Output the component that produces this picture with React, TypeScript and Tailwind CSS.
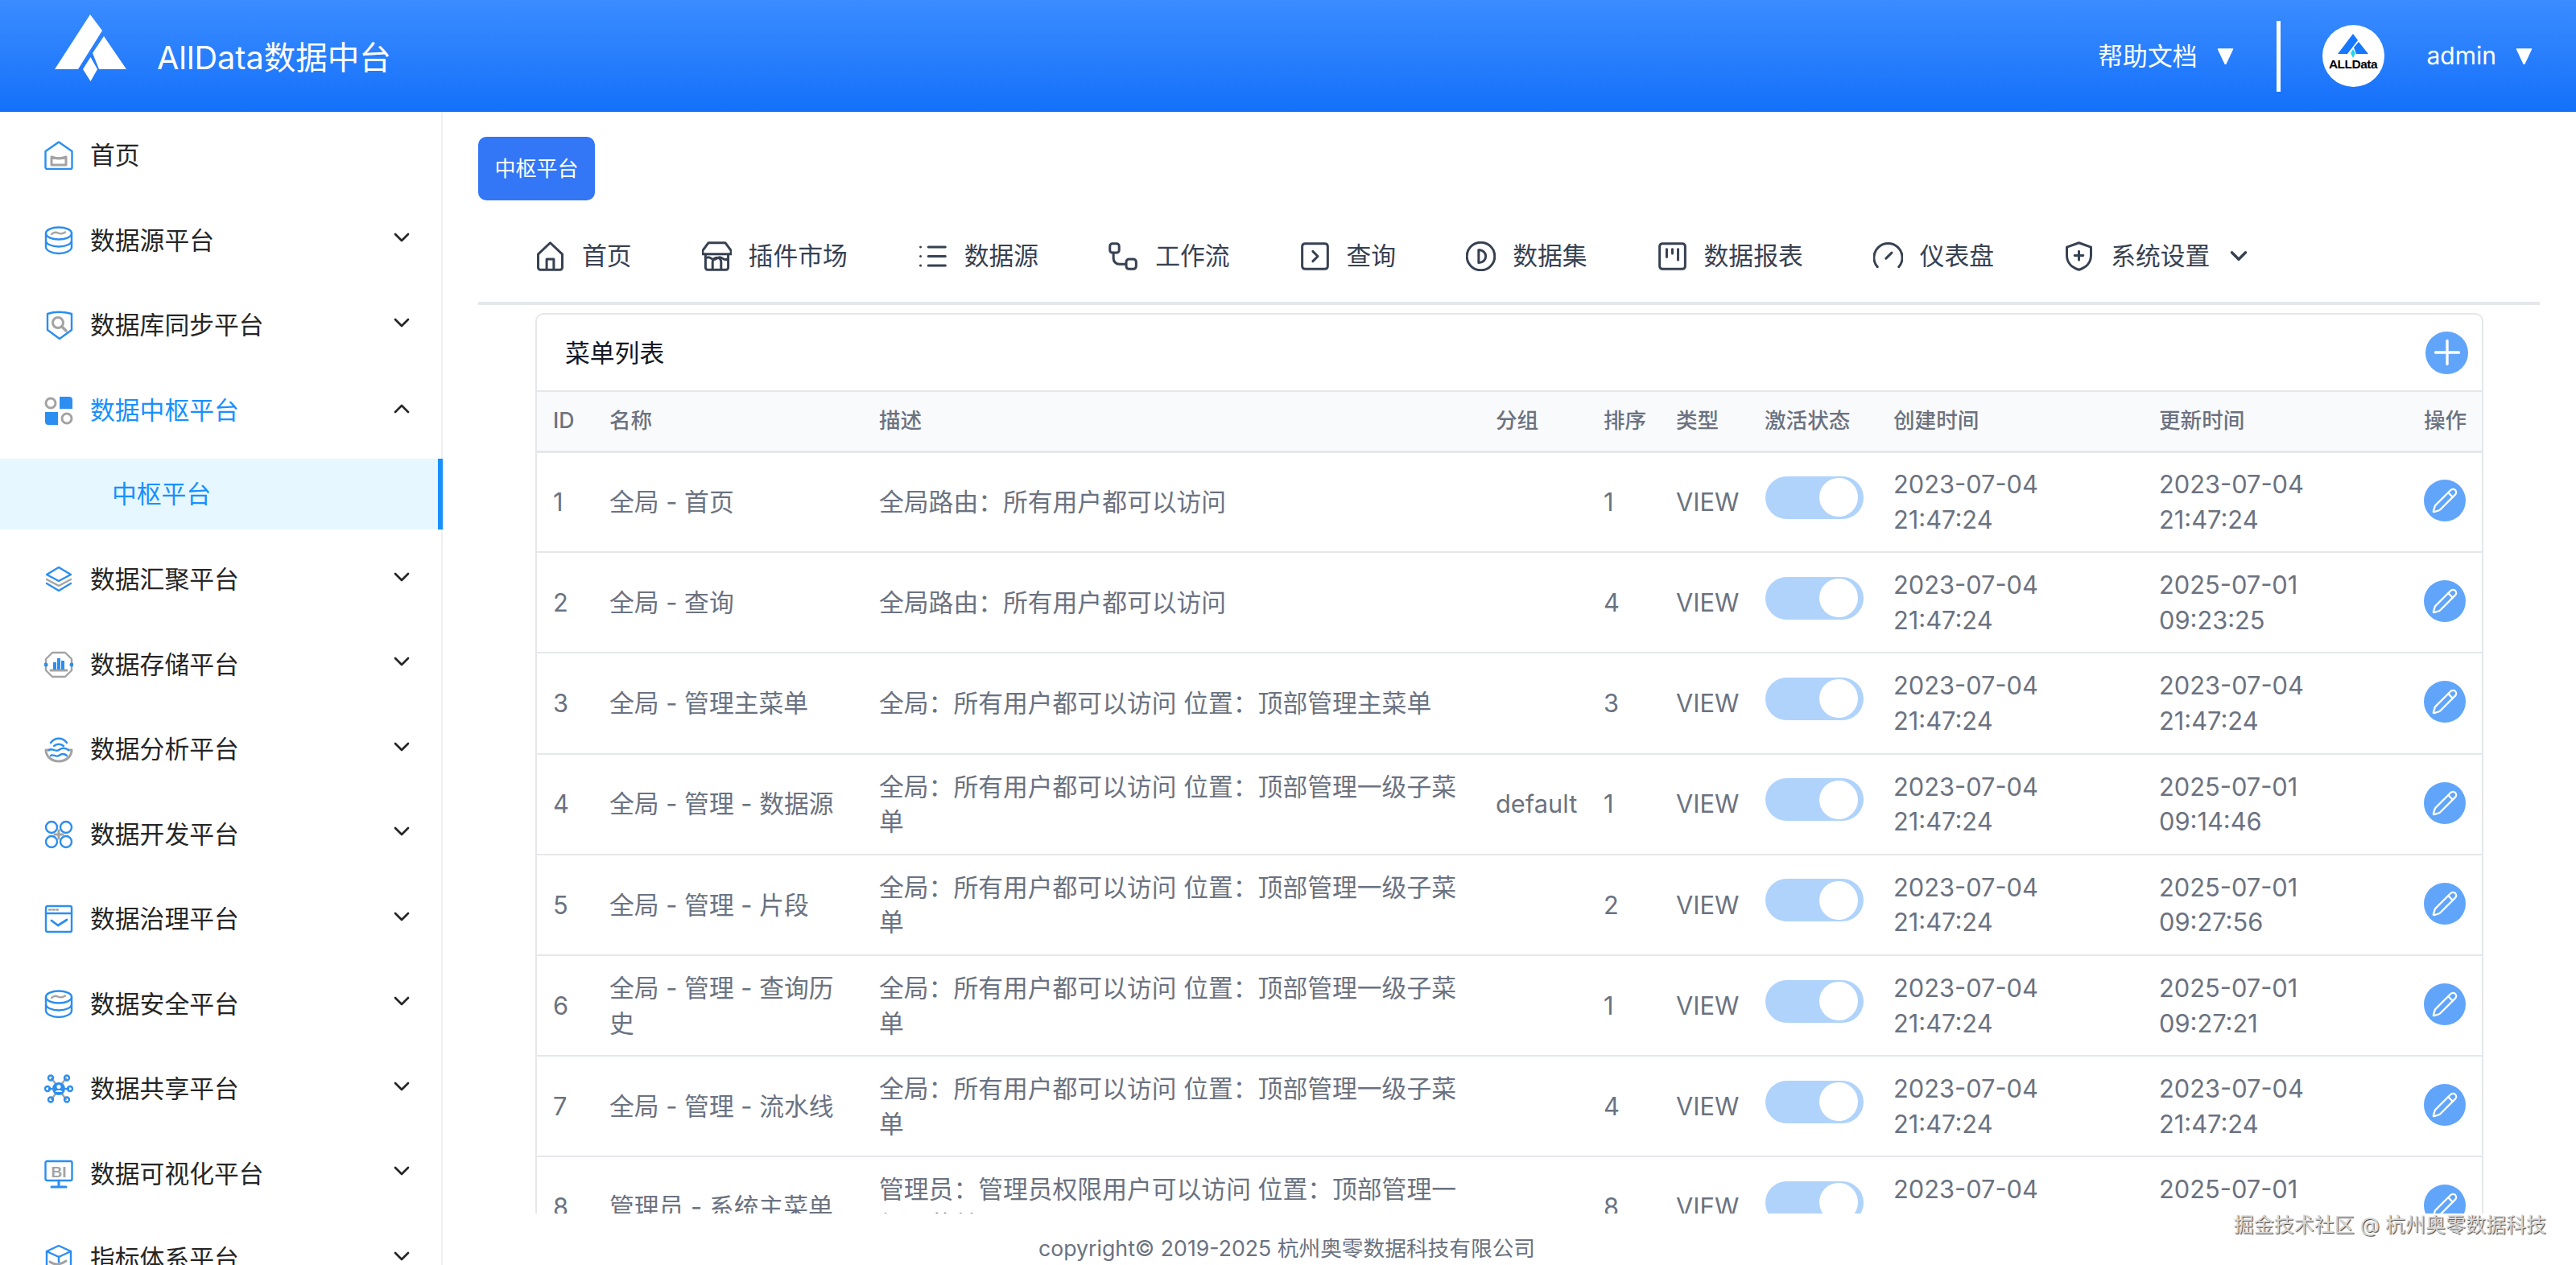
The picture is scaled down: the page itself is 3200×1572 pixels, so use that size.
import { ChevronDown, ChevronUp, Pencil, Plus } from 'lucide-react'
import type { ReactNode } from 'react'

const B = '#2b8ef0'
const G = '#a3a3a3'

function SideSvg({ children }: { children: ReactNode }) {
    return (
        <svg viewBox="0 0 36 36" fill="none" strokeWidth={2.4} strokeLinecap="round" strokeLinejoin="round" className="h-[36px] w-[36px] shrink-0">
            {children}
        </svg>
    )
}

const sideIcons: Record<string, ReactNode> = {
    home: (
        <>
            <path d="M1.5 13 18 1.5 34.5 13v20a2 2 0 0 1-2 2h-29a2 2 0 0 1-2-2z" stroke={B} />
            <path d="M9 20c6 2.500 12 2.500 18 0v10H9z" stroke={G} strokeWidth={3} />
        </>
    ),
    db: (
        <>
            <ellipse cx="18" cy="9" rx="16" ry="7.500" stroke={B} />
            <path d="M2 9v9c0 4 7 7.500 16 7.500S34 22 34 18V9M2 18v8c0 4 7 8 16 8s16-4 16-8v-8" stroke={B} />
            <path d="M9 10c3-3 5-3 8-1.500s6 1 9-1" stroke={G} />
        </>
    ),
    shield: (
        <>
            <path d="M4 4c9-3 19-3 30 0v20L19 35 4 24z" stroke={B} />
            <circle cx="17" cy="15" r="6.500" stroke={G} strokeWidth={3} />
            <path d="m22 20 5 5" stroke={G} strokeWidth={3.500} />
        </>
    ),
    apps: (
        <>
            <circle cx="8" cy="9" r="6" stroke={G} strokeWidth={3} />
            <path d="M19 1h12a4 4 0 0 1 4 4v11H19z" fill={B} />
            <path d="M1 20h16v16H5a4 4 0 0 1-4-4z" fill={B} />
            <circle cx="28" cy="28" r="6" stroke={G} strokeWidth={3} />
        </>
    ),
    stack: (
        <>
            <path d="M18 3 33 12 18 20 3 12z" stroke={B} />
            <path d="M3 18l15 8 15-8" stroke={G} />
            <path d="M3 23l15 9 15-9" stroke={B} />
        </>
    ),
    store: (
        <>
            <path d="M10 3h16l8 8v14l-8 8H10l-8-8V11z" stroke={G} />
            <path d="M8 25h20" stroke={G} strokeWidth={3} />
            <path d="M11 15h4v9h-4zM16 10h4v14h-4zM21 13h4v11h-4z" fill={B} />
            <circle cx="2" cy="18" r="2.500" fill={B} />
            <circle cx="34" cy="18" r="2.500" fill={B} />
        </>
    ),
    wave: (
        <>
            <path d="M8 10c5-7 15-7 20 0M12 14c3.500-3 8.500-3 12 0" stroke={B} />
            <path d="M2 19c0 8 7 14 16 14s16-6 16-14h-4M2 19h4" stroke={G} strokeWidth={3} />
            <path d="M6 19c4-3 8 3 12 0s8-3 12 0M8 26c3-2.500 6.500 2.500 10 0s7-2.500 10 0" stroke={B} />
        </>
    ),
    circles: (
        <>
            <circle cx="9" cy="9" r="7" stroke={B} />
            <circle cx="27" cy="9" r="7" stroke={B} />
            <circle cx="9" cy="27" r="7" stroke={B} />
            <circle cx="27" cy="27" r="7" stroke={B} />
            <path d="M18 13v10M13 18h10" stroke={G} strokeWidth={3} />
        </>
    ),
    check: (
        <>
            <rect x="2" y="2" width="32" height="32" rx="2" stroke={B} />
            <path d="M2 11h32" stroke={B} />
            <path d="M6 6.500h2M10.500 6.500h2M15 6.500h2" stroke={G} />
            <path d="m9 20 8 6 11-7" stroke={B} strokeWidth={2.800} />
        </>
    ),
    share: (
        <>
            <path d="m9 5 6 8M27 5l-6 8M9 31l6-8M27 31l-6-8" stroke={G} />
            <path d="M6 18h3M27 18h3" stroke={B} />
            <circle cx="18" cy="18" r="8" fill={B} />
            <circle cx="18" cy="15.500" r="2.500" fill="#fff" />
            <path d="M13.500 22c1-3 8-3 9 0z" fill="#fff" />
            <circle cx="8" cy="4.500" r="3" stroke={B} />
            <circle cx="28" cy="4.500" r="3" stroke={B} />
            <circle cx="4" cy="18" r="3" stroke={B} />
            <circle cx="32" cy="18" r="3" stroke={B} />
            <circle cx="8" cy="31.500" r="3" stroke={B} />
            <circle cx="28" cy="31.500" r="3" stroke={B} />
        </>
    ),
    bi: (
        <>
            <rect x="1.500" y="2" width="33" height="24" rx="2" stroke={B} />
            <text x="18" y="21.500" textAnchor="middle" fill={G} fontSize="19" fontWeight="700" fontFamily="Liberation Sans, sans-serif">BI</text>
            <path d="M18 26v7M9 34h18" stroke={B} strokeWidth={3} />
        </>
    ),
    cube: (
        <>
            <path d="M18 2 33 9v24H3V9z" stroke={B} />
            <path d="M3 9l15 7 15-7M18 16v6" stroke={B} />
            <path d="M7 22c5 4 13 4 20-1" stroke={G} strokeWidth={3} />
        </>
    ),
}

const sideMenus: { label: string; icon: string; arrow: boolean }[] = [
    { label: '首页', icon: 'home', arrow: false },
    { label: '数据源平台', icon: 'db', arrow: true },
    { label: '数据库同步平台', icon: 'shield', arrow: true },
]

const sideMenusBottom = [
    { label: '数据汇聚平台', icon: 'stack' },
    { label: '数据存储平台', icon: 'store' },
    { label: '数据分析平台', icon: 'wave' },
    { label: '数据开发平台', icon: 'circles' },
    { label: '数据治理平台', icon: 'check' },
    { label: '数据安全平台', icon: 'db' },
    { label: '数据共享平台', icon: 'share' },
    { label: '数据可视化平台', icon: 'bi' },
    { label: '指标体系平台', icon: 'cube' },
]

function SideItem({ label, icon, arrow = true }: { label: string; icon: string; arrow?: boolean }) {
    return (
        <div className="flex h-[105.5px] shrink-0 items-center gap-[21px] pl-[55px] pr-[35px] text-[#262626]">
            <SideSvg>{sideIcons[icon]}</SideSvg>
            <span>{label}</span>
            {arrow && <ChevronDown size={32} strokeWidth={2} className="mb-[7px] ml-auto" />}
        </div>
    )
}

function NavSvg({ d, extra }: { d: string; extra?: ReactNode }) {
    return (
        <svg viewBox="1.5 1.5 21 21" fill="none" stroke="currentColor" strokeWidth={1.7} strokeLinecap="round" strokeLinejoin="round" className="h-[37px] w-[37px] shrink-0">
            <path d={d} />
            {extra}
        </svg>
    )
}

const navItems = [
    { label: '首页', icon: <NavSvg d="M3.500 10.500 12 2.500l8.500 8v9.500a1.500 1.500 0 0 1-1.500 1.500H5A1.500 1.500 0 0 1 3.500 20zM9.500 21.500V14h5v7.500" /> },
    { label: '插件市场', icon: <NavSvg d="M6 2.500h12l4 5.500v2.500H2V8zM4 10.500V20a1.500 1.500 0 0 0 1.500 1.500h13A1.500 1.500 0 0 0 20 20v-9.500M9 21.500V16a3 3 0 0 1 6 0v5.500M4 13.500c1.300-1 2.700-1 4 0s2.700 1 4 0 2.700-1 4 0 2.700 1 4 0" /> },
    { label: '数据源', icon: <NavSvg d="M9 5.500h12M9 12h12M9 18.500h12M3.500 5.500h.01M3.500 12h.01M3.500 18.500h.01" /> },
    { label: '工作流', icon: <NavSvg d="M5 9.500v4a4 4 0 0 0 4 4h4.500" extra={<><rect x="2.500" y="3" width="6.500" height="6.500" rx="1.800" /><rect x="14" y="14" width="7" height="7" rx="2" /></>} /> },
    { label: '查询', icon: <NavSvg d="m10.500 8.500 3.500 3.500-3.500 3.500" extra={<rect x="3" y="3" width="18" height="18" rx="2" />} /> },
    { label: '数据集', icon: <NavSvg d="M10.500 7.500v9c3 0 5-2 5-4.500s-2-4.500-5-4.500z" extra={<circle cx="12" cy="12" r="9.800" />} /> },
    { label: '数据报表', icon: <NavSvg d="M8 7v5.500M12 7v3M16 7v7.500" extra={<rect x="3" y="3" width="18" height="18" rx="2" />} /> },
    { label: '仪表盘', icon: <NavSvg d="M4.500 19.500A10 10 0 1 1 19.500 19.500M10.500 13.500 14.500 9.500" /> },
]

function Triangle() {
    return (
        <svg viewBox="0 0 20 20" className="h-[20px] w-[21px] shrink-0" fill="#fff">
            <path d="M1 1h18L10 20z" stroke="#fff" strokeWidth={1.500} strokeLinejoin="round" />
        </svg>
    )
}

const GLOBAL = '全局路由：所有用户都可以访问'
const SUB = '全局：所有用户都可以访问 位置：顶部管理一级子菜单'

const rows = [
    { id: 1, name: '全局 - 首页', desc: GLOBAL, group: '', sort: 1, updated: ['2023-07-04', '21:47:24'] },
    { id: 2, name: '全局 - 查询', desc: GLOBAL, group: '', sort: 4, updated: ['2025-07-01', '09:23:25'] },
    { id: 3, name: '全局 - 管理主菜单', desc: '全局：所有用户都可以访问 位置：顶部管理主菜单', group: '', sort: 3, updated: ['2023-07-04', '21:47:24'] },
    { id: 4, name: '全局 - 管理 - 数据源', desc: SUB, group: 'default', sort: 1, updated: ['2025-07-01', '09:14:46'] },
    { id: 5, name: '全局 - 管理 - 片段', desc: SUB, group: '', sort: 2, updated: ['2025-07-01', '09:27:56'] },
    { id: 6, name: '全局 - 管理 - 查询历史', desc: SUB, group: '', sort: 1, updated: ['2025-07-01', '09:27:21'] },
    { id: 7, name: '全局 - 管理 - 流水线', desc: SUB, group: '', sort: 4, updated: ['2023-07-04', '21:47:24'] },
    { id: 8, name: '管理员 - 系统主菜单', desc: '管理员：管理员权限用户可以访问 位置：顶部管理一级子菜单', group: '', sort: 8, updated: ['2025-07-01', '09:27:11'] },
]

const headers = ['ID', '名称', '描述', '分组', '排序', '类型', '激活状态', '创建时间', '更新时间', '操作']

export default function App() {
    return (
        <div className="relative flex h-[1572px] flex-col overflow-hidden bg-white font-['Inter','Noto_Sans_CJK_SC',sans-serif] text-[30.8px] leading-[43.6px]">
            {/* top bar */}
            <header className="flex h-[139px] shrink-0 items-center bg-gradient-to-b from-[#3a8cff] to-[#1270fa] pl-[67px] pr-[54px] text-white">
                <svg viewBox="0 0 91 84" className="mb-[19px] h-[84px] w-[91px] shrink-0" fill="#fff">
                    <path d="M45 0 60 20 30 68H1zM62 27 90 68H56L48 48zM45.500 53 54 68 45.500 83 36 68z" />
                </svg>
                <span className="ml-[37px] mt-[6px] text-[39.6px]">AllData数据中台</span>
                <div className="ml-auto flex items-center gap-[24px]">
                    <span>帮助文档</span>
                    <Triangle />
                </div>
                <div className="ml-[53px] h-[88px] w-[5px] bg-white" />
                <div className="relative ml-[52px] h-[77px] w-[77px] shrink-0 overflow-hidden rounded-full bg-white">
                    <svg viewBox="0 0 40 30" className="mx-auto mt-[11px] h-[30px] w-[40px]">
                        <path d="M20 0 26 8 13 25H1zM27 10 39 25H24L21 17z" fill="#1677ff" />
                        <path d="M20 19 23 24 20 30 17 24z" fill="#22d3ee" />
                    </svg>
                    <div className="mt-[-1px] text-center font-['Liberation_Sans',sans-serif] text-[15.5px] font-bold leading-[18px] tracking-[-0.5px] text-black">ALLData</div>
                </div>
                <div className="ml-[53px] flex items-center gap-[24px]">
                    <span className="text-[30px]">admin</span>
                    <Triangle />
                </div>
            </header>

            <div className="flex min-h-0 flex-1">
                {/* left menu */}
                <aside className="flex w-[550px] shrink-0 flex-col overflow-hidden pt-[1.5px] shadow-[inset_-2px_0_0_#f0f0f0]">
                    {sideMenus.map(m => (
                        <SideItem key={m.label} label={m.label} icon={m.icon} arrow={m.arrow} />
                    ))}
                    <div className="flex h-[105.5px] shrink-0 items-center gap-[21px] pl-[55px] pr-[35px] text-[#1890ff]">
                        <SideSvg>{sideIcons.apps}</SideSvg>
                        <span>数据中枢平台</span>
                        <ChevronUp size={32} strokeWidth={2} className="mb-[4px] ml-auto text-[#262626]" />
                    </div>
                    <div className="mb-[10px] mt-[7px] flex h-[88px] shrink-0 items-center border-r-[6px] border-[#1890ff] bg-[#e6f7ff] pl-[139px] text-[#1890ff]">
                        中枢平台
                    </div>
                    {sideMenusBottom.map(m => (
                        <SideItem key={m.label} label={m.label} icon={m.icon} />
                    ))}
                </aside>

                {/* content */}
                <main className="flex min-w-0 flex-1 flex-col pl-[44px] pr-[45px] pt-[31px]">
                    <div className="flex h-[79px] w-[145px] shrink-0 items-center justify-center rounded-[10px] bg-[#3376f6] text-[26px] text-white">
                        中枢平台
                    </div>

                    <nav className="flex h-[130px] shrink-0 items-center gap-[87px] border-b-[4px] border-[#e5e7eb] pl-[71px] pt-[12px] text-[#374151]">
                        {navItems.map(n => (
                            <div key={n.label} className="flex items-center gap-[21px]">
                                {n.icon}
                                <span>{n.label}</span>
                            </div>
                        ))}
                        <div className="flex items-center gap-[21px]">
                            <NavSvg d="M12 2.500l8.500 3v6c0 5-3.500 8.500-8.500 10-5-1.500-8.500-5-8.500-10v-6zM12 8.500v6M9 11.500h6" />
                            <span>系统设置</span>
                            <ChevronDown size={34} strokeWidth={2.400} className="ml-[-2px]" />
                        </div>
                    </nav>

                    <div className="ml-[71px] mr-[70px] mt-[10px] min-h-0 flex-1 overflow-hidden rounded-t-[10px] border-x-2 border-t-2 border-[#e5e7eb]">
                        <div className="flex h-[96px] items-center justify-between border-b-2 border-[#e5e7eb] pl-[35px] pr-[17px]">
                            <span className="pt-[2px] text-[#111827]">菜单列表</span>
                            <button className="flex h-[53px] w-[53px] items-center justify-center rounded-full bg-[#60a5fa] text-white">
                                <Plus size={50} strokeWidth={1.6} />
                            </button>
                        </div>
                        <table className="w-full table-fixed border-collapse">
                            <colgroup>
                                <col className="w-[70px]" />
                                <col className="w-[335px]" />
                                <col className="w-[766px]" />
                                <col className="w-[134px]" />
                                <col className="w-[90px]" />
                                <col className="w-[110px]" />
                                <col className="w-[160px]" />
                                <col className="w-[330px]" />
                                <col className="w-[329px]" />
                                <col className="w-[92px]" />
                            </colgroup>
                            <thead>
                                <tr className="h-[74px] border-b-[3px] border-[#e5e7eb] bg-[#f9fafb]">
                                    {headers.map(h => (
                                        <th key={h} className="whitespace-nowrap px-[20px] text-left text-[26.6px] font-medium text-[#6b7280]">{h}</th>
                                    ))}
                                </tr>
                            </thead>
                            <tbody>
                                {rows.map(r => (
                                    <tr key={r.id} className="h-[125.2px] border-b-2 border-[#e5e7eb] text-[#6b7280]">
                                        <td className="px-[20px]">{r.id}</td>
                                        <td className="px-[20px]">{r.name}</td>
                                        <td className="px-[20px]">{r.desc}</td>
                                        <td className="px-[20px]">{r.group}</td>
                                        <td className="px-[20px]">{r.sort}</td>
                                        <td className="px-[20px]">VIEW</td>
                                        <td className="px-[20px]">
                                            <div className="mb-[11px] ml-[1px] flex h-[53px] w-[122px] items-center justify-end rounded-full bg-[#b0d3fb] pr-[7px]">
                                                <div className="h-[48px] w-[48px] rounded-full bg-white" />
                                            </div>
                                        </td>
                                        <td className="px-[20px]">2023-07-04 21:47:24</td>
                                        <td className="px-[20px]">{r.updated[0]} {r.updated[1]}</td>
                                        <td className="px-[20px]">
                                            <button className="mb-[3px] flex h-[52px] w-[52px] items-center justify-center rounded-full bg-[#60a5fa] text-white">
                                                <Pencil size={34} strokeWidth={1.6} />
                                            </button>
                                        </td>
                                    </tr>
                                ))}
                            </tbody>
                        </table>
                    </div>

                    <footer className="flex h-[64px] shrink-0 items-center pl-[696px] pt-[24px] text-[26.7px] text-[#6b7280]">
                        copyright© 2019-2025 杭州奥零数据科技有限公司
                    </footer>
                </main>
            </div>

            {/* watermark */}
            <div className="absolute bottom-[31px] right-[37px] text-[25px] leading-[38px] text-[#d8d8d8] [text-shadow:1px_1px_1px_rgba(0,0,0,0.75)]">
                掘金技术社区 @ 杭州奥零数据科技
            </div>
        </div>
    )
}
